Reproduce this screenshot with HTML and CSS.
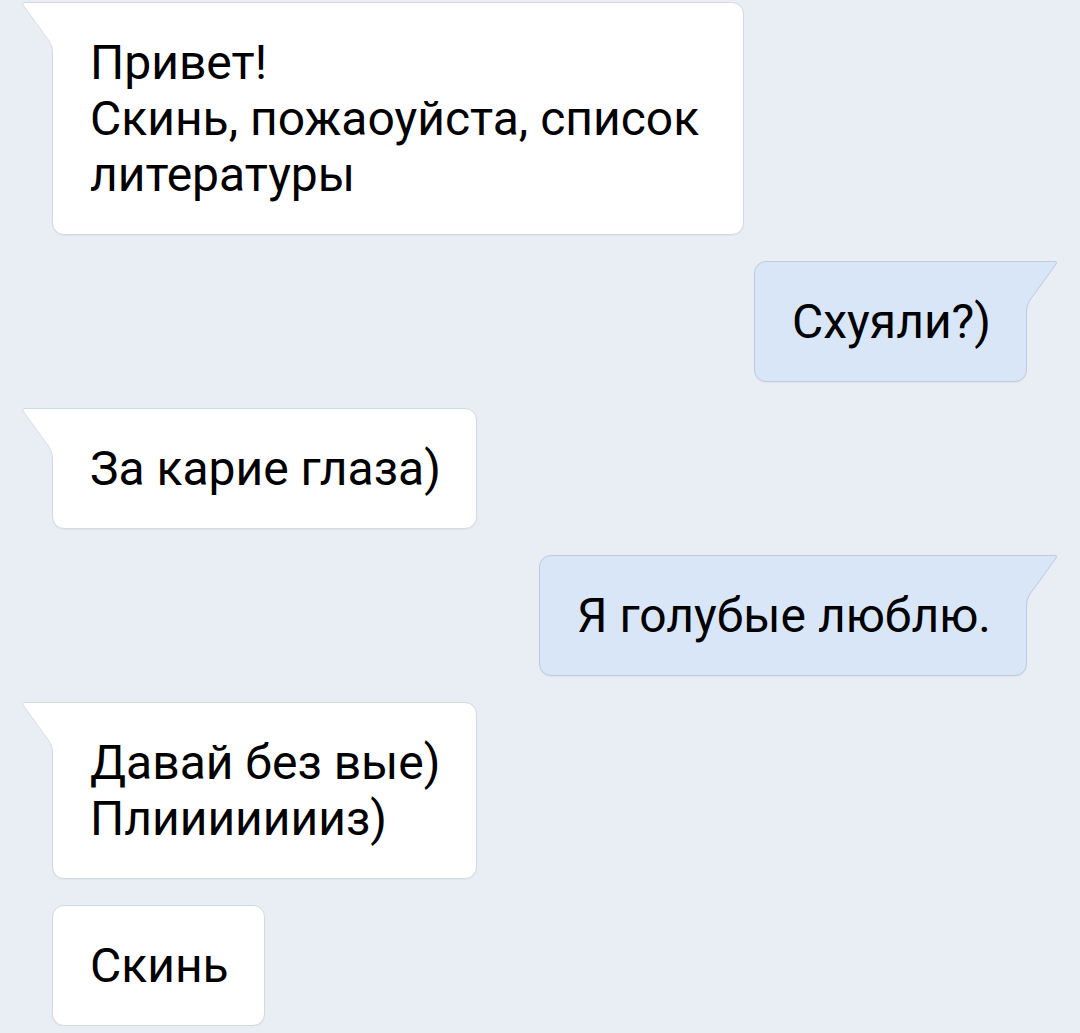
FILE: index.html
```html
<!DOCTYPE html>
<html lang="ru">
<head>
  <meta charset="UTF-8">
  <meta name="viewport" content="width=device-width, initial-scale=1.0">
  <title>Диалог</title>
  <link rel="stylesheet" href="styles.css">
</head>
<body>
  <div class="chat">
    <div class="msg in tail">
      <svg class="tail-shape" width="34" height="50" viewBox="0 0 34 50">
        <path class="tail-fill" d="M34 0 L3 0 Q0 0 1.5 2.5 L23 33 Q31 42 31 50 L34 50 Z"/>
        <path class="tail-line" d="M34 0.5 L3 0.5 Q0.5 0.5 2 3 L23.4 32.7 Q31.5 42 31.5 50"/>
      </svg>
      <div class="text">Привет!
Скинь, пожаоуйста, список литературы</div>
    </div>

    <div class="msg out tail">
      <svg class="tail-shape" width="34" height="50" viewBox="0 0 34 50">
        <path class="tail-fill" d="M34 0 L3 0 Q0 0 1.5 2.5 L23 33 Q31 42 31 50 L34 50 Z"/>
        <path class="tail-line" d="M34 0.5 L3 0.5 Q0.5 0.5 2 3 L23.4 32.7 Q31.5 42 31.5 50"/>
      </svg>
      <div class="text">Схуяли?)</div>
    </div>

    <div class="msg in tail">
      <svg class="tail-shape" width="34" height="50" viewBox="0 0 34 50">
        <path class="tail-fill" d="M34 0 L3 0 Q0 0 1.5 2.5 L23 33 Q31 42 31 50 L34 50 Z"/>
        <path class="tail-line" d="M34 0.5 L3 0.5 Q0.5 0.5 2 3 L23.4 32.7 Q31.5 42 31.5 50"/>
      </svg>
      <div class="text">За карие глаза)</div>
    </div>

    <div class="msg out tail">
      <svg class="tail-shape" width="34" height="50" viewBox="0 0 34 50">
        <path class="tail-fill" d="M34 0 L3 0 Q0 0 1.5 2.5 L23 33 Q31 42 31 50 L34 50 Z"/>
        <path class="tail-line" d="M34 0.5 L3 0.5 Q0.5 0.5 2 3 L23.4 32.7 Q31.5 42 31.5 50"/>
      </svg>
      <div class="text">Я голубые люблю.</div>
    </div>

    <div class="msg in tail">
      <svg class="tail-shape" width="34" height="50" viewBox="0 0 34 50">
        <path class="tail-fill" d="M34 0 L3 0 Q0 0 1.5 2.5 L23 33 Q31 42 31 50 L34 50 Z"/>
        <path class="tail-line" d="M34 0.5 L3 0.5 Q0.5 0.5 2 3 L23.4 32.7 Q31.5 42 31.5 50"/>
      </svg>
      <div class="text">Давай без вые)
Плиииииииз)</div>
    </div>

    <div class="msg in">
      <div class="text">Скинь</div>
    </div>
  </div>
</body>
</html>
```

FILE: styles.css
```css
body {
  margin: 0;
  background-color: #e9eef4;
  font-family: Roboto, "Noto Sans", sans-serif;
  color: #000;
}

.chat {
  display: flex;
  flex-direction: column;
  gap: 26px;
  padding: 2px 53px 0 52px;
}

.msg {
  position: relative;
  box-sizing: border-box;
  max-width: 692px;
  padding: 32px 35px 31px 37px;
  border: 1px solid #d3d9e1;
  border-radius: 12px;
  background-color: #fff;
  box-shadow: 0 1px 1px rgba(0, 0, 0, 0.04);
}

.msg .text {
  font-size: 48px;
  line-height: 56px;
  white-space: pre-line;
}

.msg.in {
  align-self: flex-start;
}

.msg.out {
  align-self: flex-end;
  background-color: #d8e6f8;
  border-color: #bccbe0;
}

.msg.in.tail {
  border-top-left-radius: 0;
}

.msg.out.tail {
  border-top-right-radius: 0;
}

/* bubble tail */
.tail-shape {
  position: absolute;
  top: -1px;
  left: -32px;
}

.msg.out .tail-shape {
  left: auto;
  right: -32px;
  transform: scaleX(-1);
}

.tail-fill {
  fill: #fff;
}

.tail-line {
  fill: none;
  stroke: #d3d9e1;
  stroke-width: 1;
}

.msg.out .tail-fill {
  fill: #d8e6f8;
}

.msg.out .tail-line {
  stroke: #bccbe0;
}
```
